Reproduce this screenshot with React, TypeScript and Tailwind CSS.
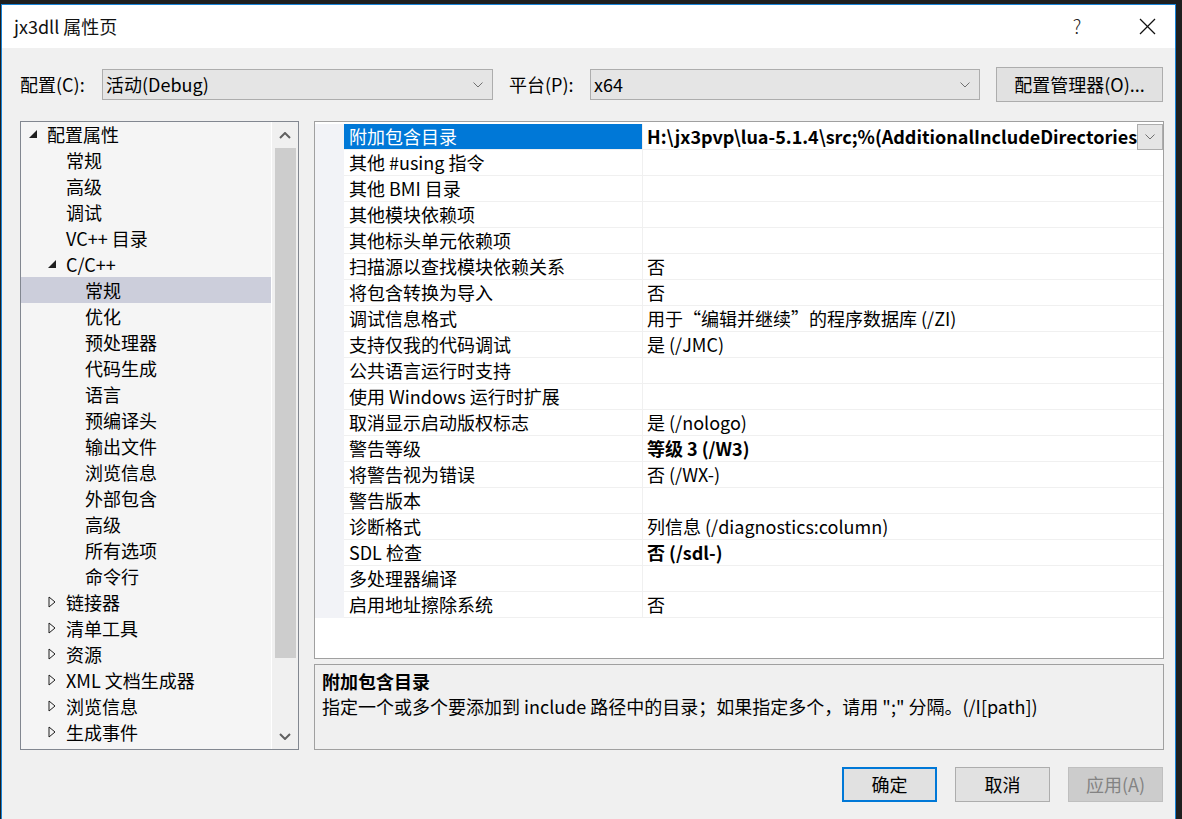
import React from "react";

type TreeItem = {
  label: string;
  level: number;
  arrow?: "open" | "closed";
  selected?: boolean;
};

const tree: TreeItem[] = [
  { label: "配置属性", level: 0, arrow: "open" },
  { label: "常规", level: 1 },
  { label: "高级", level: 1 },
  { label: "调试", level: 1 },
  { label: "VC++ 目录", level: 1 },
  { label: "C/C++", level: 1, arrow: "open" },
  { label: "常规", level: 2, selected: true },
  { label: "优化", level: 2 },
  { label: "预处理器", level: 2 },
  { label: "代码生成", level: 2 },
  { label: "语言", level: 2 },
  { label: "预编译头", level: 2 },
  { label: "输出文件", level: 2 },
  { label: "浏览信息", level: 2 },
  { label: "外部包含", level: 2 },
  { label: "高级", level: 2 },
  { label: "所有选项", level: 2 },
  { label: "命令行", level: 2 },
  { label: "链接器", level: 1, arrow: "closed" },
  { label: "清单工具", level: 1, arrow: "closed" },
  { label: "资源", level: 1, arrow: "closed" },
  { label: "XML 文档生成器", level: 1, arrow: "closed" },
  { label: "浏览信息", level: 1, arrow: "closed" },
  { label: "生成事件", level: 1, arrow: "closed" },
];

type Prop = { name: string; value?: string; bold?: boolean };

const props: Prop[] = [
  { name: "附加包含目录", value: "H:\\jx3pvp\\lua-5.1.4\\src;%(AdditionalIncludeDirectories)", bold: true },
  { name: "其他 #using 指令" },
  { name: "其他 BMI 目录" },
  { name: "其他模块依赖项" },
  { name: "其他标头单元依赖项" },
  { name: "扫描源以查找模块依赖关系", value: "否" },
  { name: "将包含转换为导入", value: "否" },
  { name: "调试信息格式", value: "用于“编辑并继续”的程序数据库 (/ZI)" },
  { name: "支持仅我的代码调试", value: "是 (/JMC)" },
  { name: "公共语言运行时支持" },
  { name: "使用 Windows 运行时扩展" },
  { name: "取消显示启动版权标志", value: "是 (/nologo)" },
  { name: "警告等级", value: "等级 3 (/W3)", bold: true },
  { name: "将警告视为错误", value: "否 (/WX-)" },
  { name: "警告版本" },
  { name: "诊断格式", value: "列信息 (/diagnostics:column)" },
  { name: "SDL 检查", value: "否 (/sdl-)", bold: true },
  { name: "多处理器编译" },
  { name: "启用地址擦除系统", value: "否" },
];

function SmallChevron() {
  return (
    <svg width="10" height="6" viewBox="0 0 10 6" className="shrink-0">
      <polyline points="0.5,0.5 5,5 9.5,0.5" fill="none" stroke="#707070" strokeWidth="1" />
    </svg>
  );
}

function Select({ value, width }: { value: string; width: string }) {
  return (
    <div className={`${width} h-[31px] shrink-0 bg-[#e5e5e5] border border-[#adadad] flex items-center pl-[3px] pr-[9px]`}>
      <span className="flex-1">{value}</span>
      <SmallChevron />
    </div>
  );
}

function TreeArrow({ kind }: { kind?: "open" | "closed" }) {
  if (kind === "open")
    return (
      <svg width="8" height="8" viewBox="0 0 8 8">
        <polygon points="8,0 8,8 0,8" fill="#1e1e1e" />
      </svg>
    );
  if (kind === "closed")
    return (
      <svg width="8" height="12" viewBox="0 0 8 12">
        <polygon points="1,1 7,6 1,11" fill="none" stroke="#1e1e1e" strokeWidth="1" />
      </svg>
    );
  return null;
}

function Button({ label, variant }: { label: string; variant?: "default" | "disabled" }) {
  const cls =
    variant === "default"
      ? "border-2 border-[#0078d7] bg-[#e1e1e1] text-black"
      : variant === "disabled"
      ? "border border-[#bfbfbf] bg-[#cccccc] text-[#838383]"
      : "border border-[#adadad] bg-[#e1e1e1] text-black";
  return (
    <div className={`w-[95px] h-[35px] flex items-center justify-center ${cls}`}>{label}</div>
  );
}

export default function App() {
  return (
    <div className="w-[1182px] h-[819px] bg-[#1f1f1f] overflow-hidden pt-[4px] pl-[1px] font-['Noto_Sans_CJK_SC',sans-serif] text-[18px] text-black">
      <div className="w-[1175px] h-[820px] border border-[#1883d7] bg-[#f0f0f0] flex flex-col">
        {/* title bar */}
        <div className="h-[43px] bg-white flex items-center pl-[12px] shrink-0">
          <span className="flex-1 text-[18px] text-[#111]">jx3dll 属性页</span>
          <span className="w-[20px] text-center mr-[52px] text-[19px] font-light text-[#222]">?</span>
          <svg width="17" height="17" viewBox="0 0 17 17" className="mr-[19px]">
            <line x1="1" y1="1" x2="16" y2="16" stroke="#111" strokeWidth="1.2" />
            <line x1="16" y1="1" x2="1" y2="16" stroke="#111" strokeWidth="1.2" />
          </svg>
        </div>

        <div className="flex-1 flex flex-col pl-[18px] pr-[11px]">
          {/* config row */}
          <div className="mt-[19px] h-[35px] flex items-center">
            <span className="w-[82px] shrink-0">配置(C):</span>
            <Select value="活动(Debug)" width="w-[391px]" />
            <span className="w-[97px] shrink-0 pl-[16px]">平台(P):</span>
            <Select value="x64" width="w-[390px]" />
            <div className="ml-[16px] w-[167px] shrink-0 h-[35px] bg-[#e1e1e1] border border-[#adadad] flex items-center justify-center">
              配置管理器(O)...
            </div>
          </div>

          {/* main */}
          <div className="mt-[19px] flex gap-[15px]">
            {/* tree */}
            <div className="w-[280px] h-[629px] border border-[#828790] bg-[#f5f5f5] flex">
              <div className="flex-1 -mt-px">
                {tree.map((t, i) => (
                  <div
                    key={i}
                    className={`h-[26px] flex items-center whitespace-nowrap ${t.selected ? "bg-[#cccedb]" : ""}`}
                    style={{ paddingLeft: 8 + t.level * 19 }}
                  >
                    <span className="w-[18px] flex items-center">
                      <TreeArrow kind={t.arrow} />
                    </span>
                    <span>{t.label}</span>
                  </div>
                ))}
              </div>
              <div className="w-[27px] border-l border-white bg-[#f0f0f0] flex flex-col items-center">
                <div className="h-[26px] flex items-center justify-center">
                  <svg width="12" height="7" viewBox="0 0 12 7">
                    <polyline points="1,6 6,1 11,6" fill="none" stroke="#606060" strokeWidth="2" />
                  </svg>
                </div>
                <div className="w-[21px] h-[510px] bg-[#cdcdcd]" />
                <div className="flex-1" />
                <div className="h-[26px] flex items-center justify-center">
                  <svg width="12" height="7" viewBox="0 0 12 7">
                    <polyline points="1,1 6,6 11,1" fill="none" stroke="#606060" strokeWidth="2" />
                  </svg>
                </div>
              </div>
            </div>

            {/* right column */}
            <div className="w-[850px] flex flex-col gap-[5px]">
              <div className="h-[538px] border border-[#a0a0a0] bg-white pt-[2px]">
                {props.map((p, i) => {
                  const sel = i === 0;
                  return (
                    <div key={i} className="h-[26px] flex">
                      <div className="w-[29px] bg-[#f2f3f7]" />
                      <div
                        className={`w-[299px] border-b border-r border-[#f0f0f0] pl-[5px] flex items-center whitespace-nowrap ${
                          sel ? "bg-[#0078d7] text-white" : ""
                        }`}
                      >
                        {p.name}
                      </div>
                      <div className="flex-1 min-w-0 border-b border-[#f0f0f0] flex items-center">
                        <span
                          className={`flex-1 min-w-0 overflow-hidden whitespace-nowrap pl-[4px] ${p.bold ? "font-bold" : ""}`}
                        >
                          {p.value ?? ""}
                        </span>
                        {sel && (
                          <div className="w-[26px] h-[26px] bg-[#e5e5e5] border border-[#adadad] flex items-center justify-center shrink-0">
                            <SmallChevron />
                          </div>
                        )}
                      </div>
                    </div>
                  );
                })}
              </div>
              <div className="h-[86px] border border-[#a0a0a0] bg-[#f0f0f0] pl-[7px] pt-[4px] leading-[25px]">
                <div className="font-bold">附加包含目录</div>
                <div className="whitespace-nowrap">
                  指定一个或多个要添加到 include 路径中的目录；如果指定多个，请用 ";" 分隔。(/I[path])
                </div>
              </div>
            </div>
          </div>

          {/* buttons */}
          <div className="mt-[17px] flex justify-end gap-[18px] pr-[1px]">
            <Button label="确定" variant="default" />
            <Button label="取消" />
            <Button label="应用(A)" variant="disabled" />
          </div>
        </div>
      </div>
    </div>
  );
}
